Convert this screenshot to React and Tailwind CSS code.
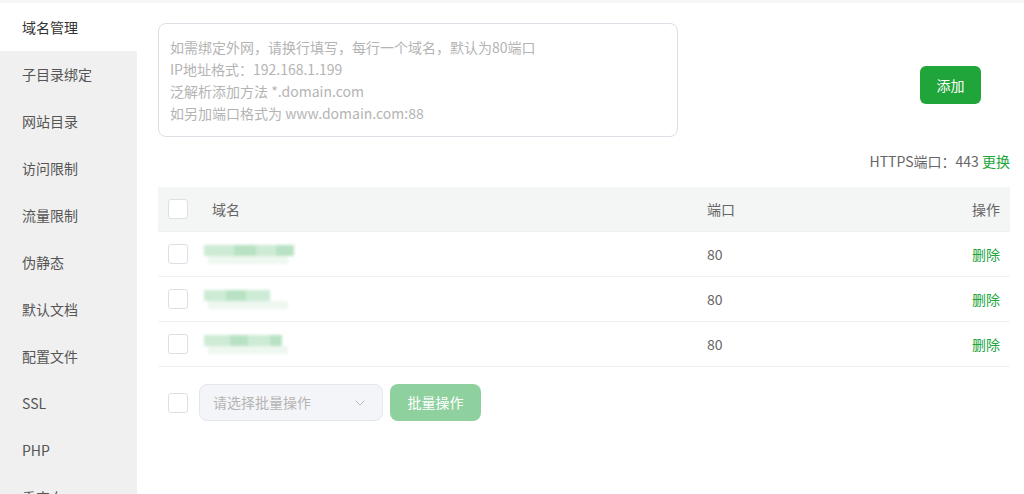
import { ChevronDown } from "lucide-react";

const menu = ["域名管理", "子目录绑定", "网站目录", "访问限制", "流量限制", "伪静态", "默认文档", "配置文件", "SSL", "PHP", "重定向"];

const rows = [
  { id: 1, w: [30, 22, 20, 18], port: 80 },
  { id: 2, w: [22, 20, 24], port: 80 },
  { id: 3, w: [26, 18, 22, 12], port: 80 },
];

function Box() {
  return <span className="block w-[20px] h-[20px] rounded-[3px] border border-[#dcdfe6] bg-white" />;
}

function Blurred({ w }) {
  return (
    <div className="relative h-[26px] w-[100px] blur-[1.5px]">
      <div className="absolute left-0 top-[4px] flex">
        {w.map((x, i) => (
          <span key={i} className={i % 2 ? "h-[11px] bg-[#b8e2c3]" : "h-[11px] bg-[#cdebd5]"} style={{ width: x }} />
        ))}
      </div>
      <div className="absolute left-[4px] top-[15px] h-[8px] w-[80px] bg-[#eef7f0]" />
    </div>
  );
}

export default function App() {
  return (
    <div className="w-[1024px] h-[494px] overflow-hidden bg-white flex flex-col text-[14px] font-['Microsoft_YaHei','Noto_Sans_CJK_SC',sans-serif]">
      <div className="h-[3px] shrink-0 bg-[#f6f6f6]" />
      <div className="flex flex-1 min-h-0 overflow-hidden">
        <aside className="w-[137px] shrink-0 bg-[#f0f0f0]">
          {menu.map((m, i) => (
            <div
              key={m}
              className={
                i === 0
                  ? "h-[48px] pl-[22px] flex items-center bg-white text-[#333]"
                  : "h-[47px] pl-[22px] flex items-center text-[#555]"
              }
            >
              {m}
            </div>
          ))}
        </aside>

        <main className="flex-1 pl-[21px] pr-[14px] pt-[20px]">
          <div className="flex items-start">
            <div className="w-[520px] h-[114px] rounded-[8px] border border-[#dcdfe6] px-[11px] pt-[12px] text-[#b4b4b4] leading-[22px]">
              <div>如需绑定外网，请换行填写，每行一个域名，默认为80端口</div>
              <div>IP地址格式：192.168.1.199</div>
              <div>泛解析添加方法 *.domain.com</div>
              <div>如另加端口格式为 www.domain.com:88</div>
            </div>
            <button className="ml-auto mr-[29px] mt-[43px] h-[38px] w-[61px] rounded-[6px] bg-[#20a53a] text-white">
              添加
            </button>
          </div>

          <div className="mt-[14px] h-[20px] leading-[20px] text-right text-[#666]">
            HTTPS端口：443 <span className="text-[#20a53a]">更换</span>
          </div>

          <div className="mt-[16px]">
            <div className="flex items-center h-[45px] bg-[#f4f5f5] border-b border-[#eef0f3] text-[#666]">
              <div className="pl-[10px] w-[54px]"><Box /></div>
              <div className="w-[495px]">域名</div>
              <div className="flex-1">端口</div>
              <div className="pr-[10px]">操作</div>
            </div>
            {rows.map((r) => (
              <div key={r.id} className="flex items-center h-[45px] border-b border-[#eef0f3] text-[#666]">
                <div className="pl-[10px] w-[46px]"><Box /></div>
                <div className="w-[503px]"><Blurred w={r.w} /></div>
                <div className="flex-1">{r.port}</div>
                <div className="pr-[10px] text-[#20a53a]">删除</div>
              </div>
            ))}
          </div>

          <div className="mt-[17px] flex items-center">
            <div className="pl-[10px] pr-[11px]"><Box /></div>
            <div className="h-[37px] w-[184px] rounded-[8px] border border-[#e4e7ed] bg-[#f4f5f8] pl-[13px] pr-[14px] flex items-center justify-between text-[#b4b4b4]">
              <span>请选择批量操作</span>
              <ChevronDown size={16} strokeWidth={1.5} className="text-[#bbb]" />
            </div>
            <button className="ml-[7px] h-[37px] w-[91px] rounded-[8px] bg-[#8fd19e] text-white">
              批量操作
            </button>
          </div>
        </main>
      </div>
    </div>
  );
}
